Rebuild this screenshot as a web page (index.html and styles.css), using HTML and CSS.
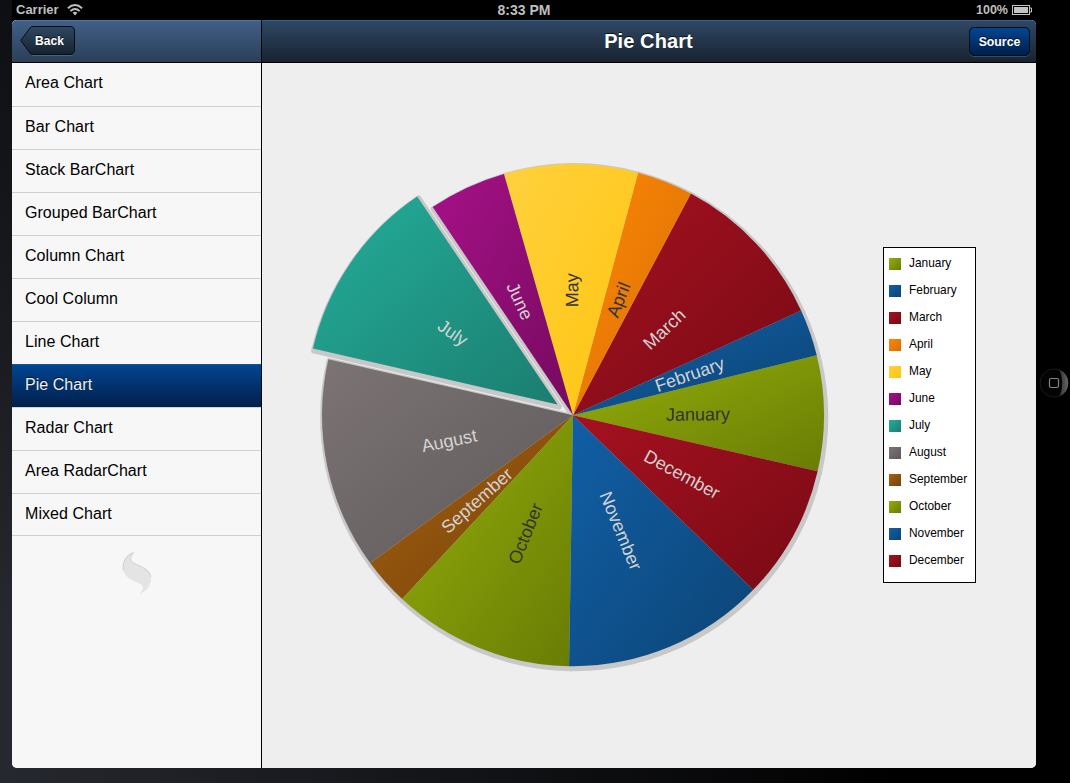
FILE: index.html
```html
<!DOCTYPE html>
<html lang="en">
<head>
<meta charset="utf-8">
<title>Pie Chart</title>
<link rel="stylesheet" href="styles.css">
</head>
<body>
<div class="device">
  <div class="status">
    <div class="status-left">Carrier
      <svg class="wifi" width="16" height="12" viewBox="0 0 16 12" fill="none" stroke="#bfbfbf" stroke-width="1.9"><path d="M.9 4.3Q8-2.1 15.1 4.3M3.4 7.1Q8 2.9 12.6 7.1"/><path d="M5.6 8.8Q8 6.8 10.4 8.8L8 11.4Z" fill="#bfbfbf" stroke="none"/></svg>
    </div>
    <div class="status-time">8:33 PM</div>
    <div class="status-right">100%
      <svg width="21" height="10" viewBox="0 0 21 10"><rect x=".5" y=".5" width="17" height="9" fill="none" stroke="#c4c2c6"/><rect x="2" y="2" width="14" height="6" fill="#c4c2c6"/><path d="M18 3h1.5v4H18" fill="none" stroke="#c4c2c6"/></svg>
    </div>
  </div>
  <div class="screen">
    <aside class="sidebar">
      <header class="bar bar-side">
        <div class="back">
          <svg width="56" height="31" viewBox="0 0 56 31"><defs><linearGradient id="bk" x2="0" y2="1"><stop offset="0" stop-color="#2f4863"/><stop offset="1" stop-color="#17222f"/></linearGradient></defs><path d="M12 29.500H50Q54.500 29.500 54.500 25" fill="none" stroke="#48627f"/><path d="M13 .500H50Q54.500 .500 54.500 5V24Q54.500 28.500 50 28.500H13Q11.200 28.500 10 27L.8 14.500L10 2Q11.200 .500 13 .500Z" fill="url(#bk)" stroke="#080d13"/></svg>
          <span>Back</span>
        </div>
      </header>
      <ul class="list">
        <li>Area Chart</li><li>Bar Chart</li><li>Stack BarChart</li><li>Grouped BarChart</li><li>Column Chart</li><li>Cool Column</li><li>Line Chart</li><li class="selected">Pie Chart</li><li>Radar Chart</li><li>Area RadarChart</li><li>Mixed Chart</li>
      </ul>
      <svg class="logo" width="30" height="43" viewBox="0 0 30 43"><path d="M11.500.7C5 2.500 1 8 1 15C1 22 5 25.500 11 28.500C16 31 20.500 32 20.800 35.500Q21 38 17.800 41.500C25 39 29 33 29 27C29 20 25 17.500 18 14C12 11.500 8.500 10 8.700 6Q9 3 11.500.7Z" fill="#e4e4e4"/><path d="M1.200 18C.2 9 5 2.500 11.500.7Q9 3 8.700 6C8.500 10 12 11.500 18 14C25 17.500 28 20 28.800 25" fill="none" stroke="#c6c6c6" stroke-width=".8"/></svg>
    </aside>
    <main class="main">
      <header class="bar bar-main"><h1>Pie Chart</h1><div class="source">Source</div></header>
      <div class="stage">
        <svg class="pie" id="pie" width="540" height="540" viewBox="303 145 540 540"></svg>
        <div class="legend" id="legend"></div>
      </div>
    </main>
  </div>
  <svg class="home" width="30" height="30" viewBox="0 0 30 30"><defs><linearGradient id="hm"><stop offset="0" stop-color="#333"/><stop offset="1" stop-color="#666"/></linearGradient></defs><circle cx="15" cy="15" r="14" fill="#030303" stroke="#191919"/><path d="M20.500 1.700A14.500 14.500 0 0 1 20.500 28.300Q26 15 20.500 1.700Z" fill="url(#hm)"/><rect x="10.500" y="10.500" width="9" height="9" rx="1.500" fill="none" stroke="#858585" stroke-width="1.200"/></svg>
</div>
<script src="chart.js"></script>
</body>
</html>
```
FILE: styles.css
```css
* { box-sizing: border-box; }
body { margin: 0; background: #000; font-family: "Liberation Sans", Arial, sans-serif; }
.device { position: relative; width: 1070px; height: 783px; overflow: hidden; padding: 0 34px 15px 12px; background: linear-gradient(90deg, transparent 0, #000 900px), linear-gradient(#0e0f12, #191a1e 40%, #26282f 80%, #26282f); }
.status { height: 20px; display: grid; grid-template-columns: 1fr 1fr 1fr; align-items: center; padding-bottom: 1px; background: #000; color: #bfbfbf; font-weight: bold; font-size: 13px; line-height: 18px; }
.status-left, .status-right { display: flex; align-items: center; gap: 8px; padding-left: 4px; }
.status-right { justify-content: flex-end; gap: 4px; padding: 0 3px 0 0; font-size: 12.5px; }
.status-time { text-align: center; font-size: 14px; }
.screen { height: 748px; display: flex; border-radius: 5px; overflow: hidden; background: #eee; }
.sidebar { width: 250px; flex: none; background: #f7f7f7; border-right: 1px solid #000; }
.bar { height: 43px; display: flex; align-items: center; border-bottom: 1px solid #000; }
.bar-side { background: linear-gradient(#415f87, #2a3f58); border-top: 1px solid #5272a0; padding-left: 8px; }
.back { display: grid; width: 56px; height: 31px; }
.back svg, .back span { grid-area: 1 / 1; }
.back span { color: #fff; font-weight: bold; font-size: 12px; line-height: 31px; padding-left: 15px; letter-spacing: .1px; text-shadow: 0 -1px #111; }
.list { list-style: none; margin: 0; padding: 0; }
.list li { height: 43px; padding: 0 13px; line-height: 39px; font-size: 16px; letter-spacing: .05px; color: #000; border-bottom: 1px solid #cfcfcf; }
.list li:first-child { height: 44px; }
.list li:last-child { height: 42px; }
.list .selected { color: #f0f0f0; background: linear-gradient(#024490, #00204b); border-bottom-color: #c5d4e6; box-shadow: 0 -1px #0853a6; text-shadow: 0 -1px #012; }
.logo { display: block; margin: 16px auto 0; }
.main { flex: 1; display: flex; flex-direction: column; }
.bar-main { background: linear-gradient(#2e4765, #19232f); border-top: 1px solid #3d5f8e; display: grid; grid-template-columns: 1fr auto 1fr; padding-right: 6px; }
.bar-main h1 { grid-column: 2; margin: 0; padding-left: 5px; color: #fff; font-size: 20px; letter-spacing: .1px; text-shadow: 0 -1px #111; }
.source { justify-self: end; width: 61px; height: 29px; margin-bottom: 1px; border: 1px solid #000b1b; border-radius: 5px; background: linear-gradient(#034593, #001f48); color: #fff; font-size: 12.300px; font-weight: bold; line-height: 28px; text-align: center; box-shadow: 0 1px #3b4d62; text-shadow: 0 -1px #012; }
.stage { flex: 1; display: flex; align-items: flex-start; background: #eee; padding: 82px 0 0 41px; }
.pie { flex: none; font-size: 18px; }
.legend { margin: 102px 0 0 40px; width: 93px; height: 336px; border: 1px solid #000; background: #fff; padding: 1px 0 0 5px; font-size: 11.900px; }
.entry { height: 27px; display: flex; align-items: center; gap: 8px; line-height: 26px; }
.swatch { width: 12px; height: 12px; flex: none; position: relative; top: 1px; }
.home { position: absolute; left: 1039px; top: 368px; }
```
FILE: chart.js
```javascript
const slices = [
  ["January", -12.93, 13.8, "#94ae0a", "#697c05", 0, 125],
  ["February", 13.8, 24.67, "#115fa6", "#0c4475", 1, 123.5],
  ["March", 24.67, 62, "#a61120", "#780a15", 1, 125.5],
  ["April", 62, 74.97, "#ff8809", "#d66e00", 0, 124],
  ["May", 74.97, 105.97, "#ffd13e", "#ffc40d", 0, 125],
  ["June", 105.97, 124, "#a61187", "#750a5f", 1, 126],
  ["July", 124, 167.1, "#24ad9a", "#1b7e70", 1, 127],
  ["August", 167.1, 216.1, "#7c7474", "#5f5959", 1, 126.5],
  ["September", 216.1, 227.1, "#a66111", "#75420a", 1, 128.5],
  ["October", 227.1, 269.1, "#94ae0a", "#697c05", 0, 127.5],
  ["November", 269.1, 315.9, "#115fa6", "#0c4475", 1, 125],
  ["December", 315.9, 347.07, "#a61120", "#780a15", 1, 124]
];
const point = (cx, cy, r, a) => [cx + r * Math.cos(a * Math.PI / 180), cy - r * Math.sin(a * Math.PI / 180)];
let defs = "", shadows = "", wedges = "", labels = "", legend = "";
slices.forEach(([name, a, b, from, to, light, labelRadius], i) => {
  const mid = (a + b) / 2;
  const [cx, cy] = name === "July" ? point(573, 415.2, 18.7, mid) : [573, 415.2];
  const path = `M${cx} ${cy}L${point(cx, cy, 251, a).join(" ")}A251 251 0 0 0 ${point(cx, cy, 251, b).join(" ")}Z`;
  defs += `<linearGradient id="g${i}" x1="0" y1="0" x2="1" y2="1"><stop offset="0" stop-color="${from}"/><stop offset="1" stop-color="${to}"/></linearGradient>`;
  shadows += `<path d="${path}"/>`;
  wedges += `<path d="${path}" fill="url(#g${i})"/>`;
  const [x, y] = point(cx, cy, labelRadius, mid);
  const turn = mid > 91 && mid < 270 ? 180 - mid : -mid;
  labels += `<text transform="translate(${x} ${y}) rotate(${turn})" text-anchor="middle" dy="6.2" fill="${light ? "#d3d3d3" : "#333"}">${name}</text>`;
  legend += `<div class="entry"><span class="swatch" style="background:linear-gradient(135deg,${from},${to})"></span>${name}</div>`;
});
document.getElementById("pie").innerHTML = `<defs>${defs}</defs><g transform="translate(1.2 2)" fill="none" stroke="#c8c8c8" stroke-width="6" stroke-linejoin="round">${shadows}</g>${wedges}${labels}`;
document.getElementById("legend").innerHTML = legend;
```
